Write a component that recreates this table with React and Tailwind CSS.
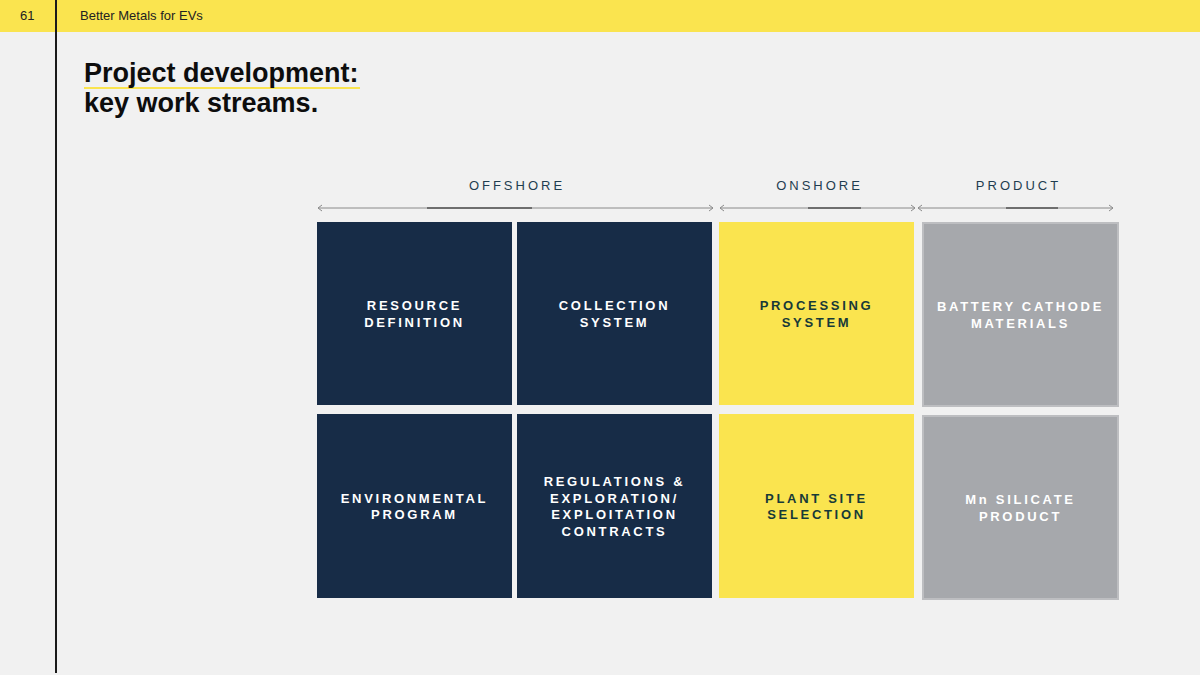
import React from "react";

const font = { fontFamily: '"Liberation Sans", Arial, sans-serif' };

function Arrow({ width, darkFrom, darkTo }) {
  return (
    <svg width={width} height="10" viewBox={`0 0 ${width} 10`} className="block">
      <line x1="1" y1="5" x2={width - 1} y2="5" stroke="#8a8a8a" strokeWidth="1" />
      <line x1={darkFrom} y1="5" x2={darkTo} y2="5" stroke="#555" strokeWidth="1.3" />
      <polyline points="5,2 1,5 5,8" fill="none" stroke="#8a8a8a" strokeWidth="1" />
      <polyline points={`${width - 5},2 ${width - 1},5 ${width - 5},8`} fill="none" stroke="#8a8a8a" strokeWidth="1" />
    </svg>
  );
}

function Box({ kind, lines }) {
  const cls =
    kind === "navy"
      ? "bg-[#172c47] text-white"
      : kind === "yellow"
      ? "bg-[#fae44f] text-[#173a38]"
      : "bg-[#a6a8ac] text-white border-2 border-[#bdbec1]";
  return (
    <div className={`${cls} h-full flex flex-col items-center justify-center text-center font-bold text-[13px] leading-[16.5px] tracking-[2.7px] pt-[2px]`}>
      {lines.map((l, i) => (
        <div key={i}>{l}</div>
      ))}
    </div>
  );
}

export default function App() {
  return (
    <div style={font} className="w-[1200px] h-[675px] bg-[#f1f1f1] flex overflow-hidden">
      <div className="w-[55px] flex flex-col">
        <div className="h-[32px] bg-[#fae44f] flex items-center pl-[20px] text-[13px] text-[#222]">61</div>
      </div>
      <div className="w-[2px] bg-[#1a1a1a] h-[673px]"></div>
      <div className="flex-1 flex flex-col">
        <div className="h-[32px] bg-[#fae44f] flex items-center pl-[23px] text-[13px] text-[#222]">Better Metals for EVs</div>
        <div className="pl-[27px] pt-[27px] text-[27px] font-bold text-[#0d0d0d] leading-[28px]">
          <div className="w-fit border-b-2 border-[#fae44f] leading-[28px] pr-[1px]">Project development:</div>
          <div className="leading-[29px]">key work streams.</div>
        </div>
        <div className="ml-[260px] mt-[60px] w-[802px]">
          <div className="flex text-[13px] tracking-[3px] text-[#1f3d50] leading-[16px]">
            <div className="w-[397px] text-center pl-[3px]">OFFSHORE</div>
            <div className="w-[198px] text-center ml-[5px] pl-[3px]">ONSHORE</div>
            <div className="w-[196px] text-center ml-[2px] pl-[3px]">PRODUCT</div>
          </div>
          <div className="flex mt-[9px]">
            <Arrow width={397} darkFrom={110} darkTo={215} />
            <div className="ml-[5px]">
              <Arrow width={197} darkFrom={89} darkTo={142} />
            </div>
            <div className="ml-[1px]">
              <Arrow width={197} darkFrom={89} darkTo={141} />
            </div>
          </div>
          <div className="flex mt-[9px]">
            <div className="w-[195px] flex flex-col gap-[9px]">
              <div className="h-[183px]"><Box kind="navy" lines={["RESOURCE", "DEFINITION"]} /></div>
              <div className="h-[184px]"><Box kind="navy" lines={["ENVIRONMENTAL", "PROGRAM"]} /></div>
            </div>
            <div className="w-[195px] ml-[5px] flex flex-col gap-[9px]">
              <div className="h-[183px]"><Box kind="navy" lines={["COLLECTION", "SYSTEM"]} /></div>
              <div className="h-[184px]"><Box kind="navy" lines={["REGULATIONS &", "EXPLORATION/", "EXPLOITATION", "CONTRACTS"]} /></div>
            </div>
            <div className="w-[195px] ml-[7px] flex flex-col gap-[9px]">
              <div className="h-[183px]"><Box kind="yellow" lines={["PROCESSING", "SYSTEM"]} /></div>
              <div className="h-[184px]"><Box kind="yellow" lines={["PLANT SITE", "SELECTION"]} /></div>
            </div>
            <div className="w-[197px] ml-[8px] flex flex-col gap-[8px]">
              <div className="h-[185px]"><Box kind="gray" lines={["BATTERY CATHODE", "MATERIALS"]} /></div>
              <div className="h-[185px]"><Box kind="gray" lines={["Mn SILICATE", "PRODUCT"]} /></div>
            </div>
          </div>
        </div>
      </div>
    </div>
  );
}
